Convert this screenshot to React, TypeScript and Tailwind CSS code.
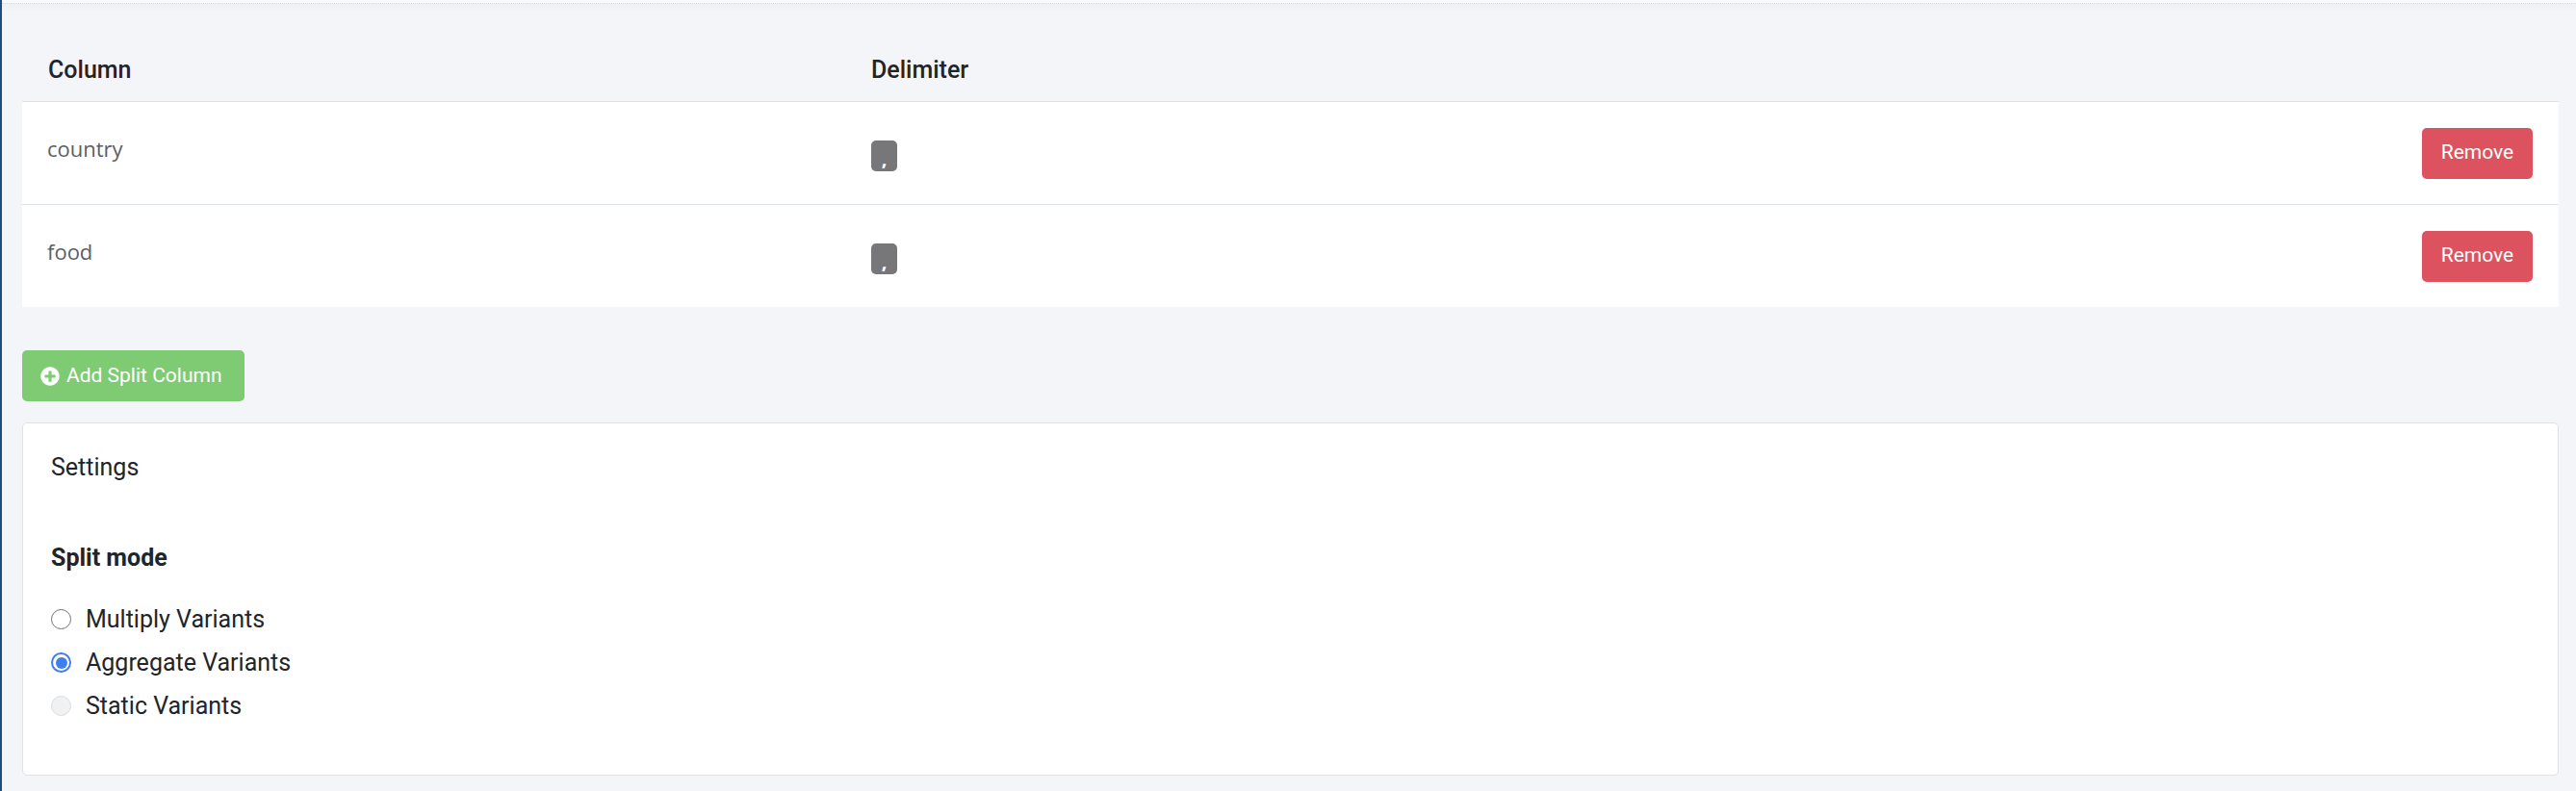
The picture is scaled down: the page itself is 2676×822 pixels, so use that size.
import React, { useState } from "react";
import { FaPlusCircle } from "react-icons/fa";

type SplitRow = { column: string; delimiter: string };

const modes = ["Multiply Variants", "Aggregate Variants", "Static Variants"];

function Radio({ checked, disabled }: { checked?: boolean; disabled?: boolean }) {
  if (checked) {
    return (
      <span className="flex h-[21px] w-[21px] items-center justify-center rounded-full border-2 border-[#3d7ff0] bg-white">
        <span className="h-[12px] w-[12px] rounded-full bg-[#3d7ff0]" />
      </span>
    );
  }
  return (
    <span
      className={`h-[21px] w-[21px] rounded-full border-[1.5px] ${
        disabled ? "border-[#dcdde0] bg-[#f0f1f3]" : "border-[#707070] bg-white"
      }`}
    />
  );
}

export default function App() {
  const [rows] = useState<SplitRow[]>([
    { column: "country", delimiter: "," },
    { column: "food", delimiter: "," },
  ]);
  const [mode, setMode] = useState(1);

  return (
    <div className="min-h-screen border-l-2 border-[#1f4e7c] bg-[#f4f5f9] font-['Roboto',sans-serif] text-[#212529]">
      {/* top edge */}
      <div className="h-[4px] border-b border-dotted border-[#d6d9de] bg-[#f8f9fb]" />
      <div className="h-[8px] bg-gradient-to-b from-[#eef0f4] to-[#f4f5f9]" />

      <div className="pl-[21px] pr-[18px] pb-[16px]">
        {/* Table */}
        <div className="mt-[29px]">
          <div className="flex h-[64px] items-center text-[25px] font-medium">
            <div className="w-[882px] pl-[27px]">Column</div>
            <div className="flex-1">Delimiter</div>
          </div>
          <div className="bg-white">
            {rows.map((r) => (
              <div key={r.column} className="flex h-[107px] items-center border-t border-[#dfe3ea]">
                <div className="w-[882px] pb-[9px] pl-[26px] font-['Open_Sans',sans-serif] text-[22px] text-[#5b6068]">
                  {r.column}
                </div>
                <div className="flex-1">
                  <span className="mt-[5px] flex h-[32px] w-[27px] items-center justify-center rounded-[5px] bg-[#77777a] pt-[6px] font-['Open_Sans',sans-serif] text-[20px] font-bold leading-[20px] text-white">
                    {r.delimiter}
                  </span>
                </div>
                <button className="mr-[27px] h-[53px] w-[115px] rounded-[5px] bg-[#dc525e] text-[21px] text-white">
                  Remove
                </button>
              </div>
            ))}
          </div>
        </div>

        <button className="mt-[45px] flex h-[53px] w-[231px] items-center gap-[7px] rounded-[5px] bg-[#7ecb73] pl-[19px] text-[21px] text-white">
          <FaPlusCircle className="h-[20px] w-[20px]" />
          Add Split Column
        </button>

        {/* Settings */}
        <div className="mt-[22px] h-[367px] rounded-[5px] border border-[#dfe2e7] bg-white pl-[29px] pt-[27px]">
          <div className="text-[25px] leading-[38px]">Settings</div>
          <div className="mt-[56px] text-[25px] font-bold leading-[38px]">Split mode</div>
          <div className="mt-[22px] flex flex-col">
            {modes.map((m, i) => (
              <label
                key={m}
                onClick={() => i !== 2 && setMode(i)}
                className="flex h-[45px] items-center gap-[15px] text-[25px]"
              >
                <Radio checked={mode === i} disabled={i === 2} />
                <span>{m}</span>
              </label>
            ))}
          </div>
        </div>
      </div>
    </div>
  );
}
